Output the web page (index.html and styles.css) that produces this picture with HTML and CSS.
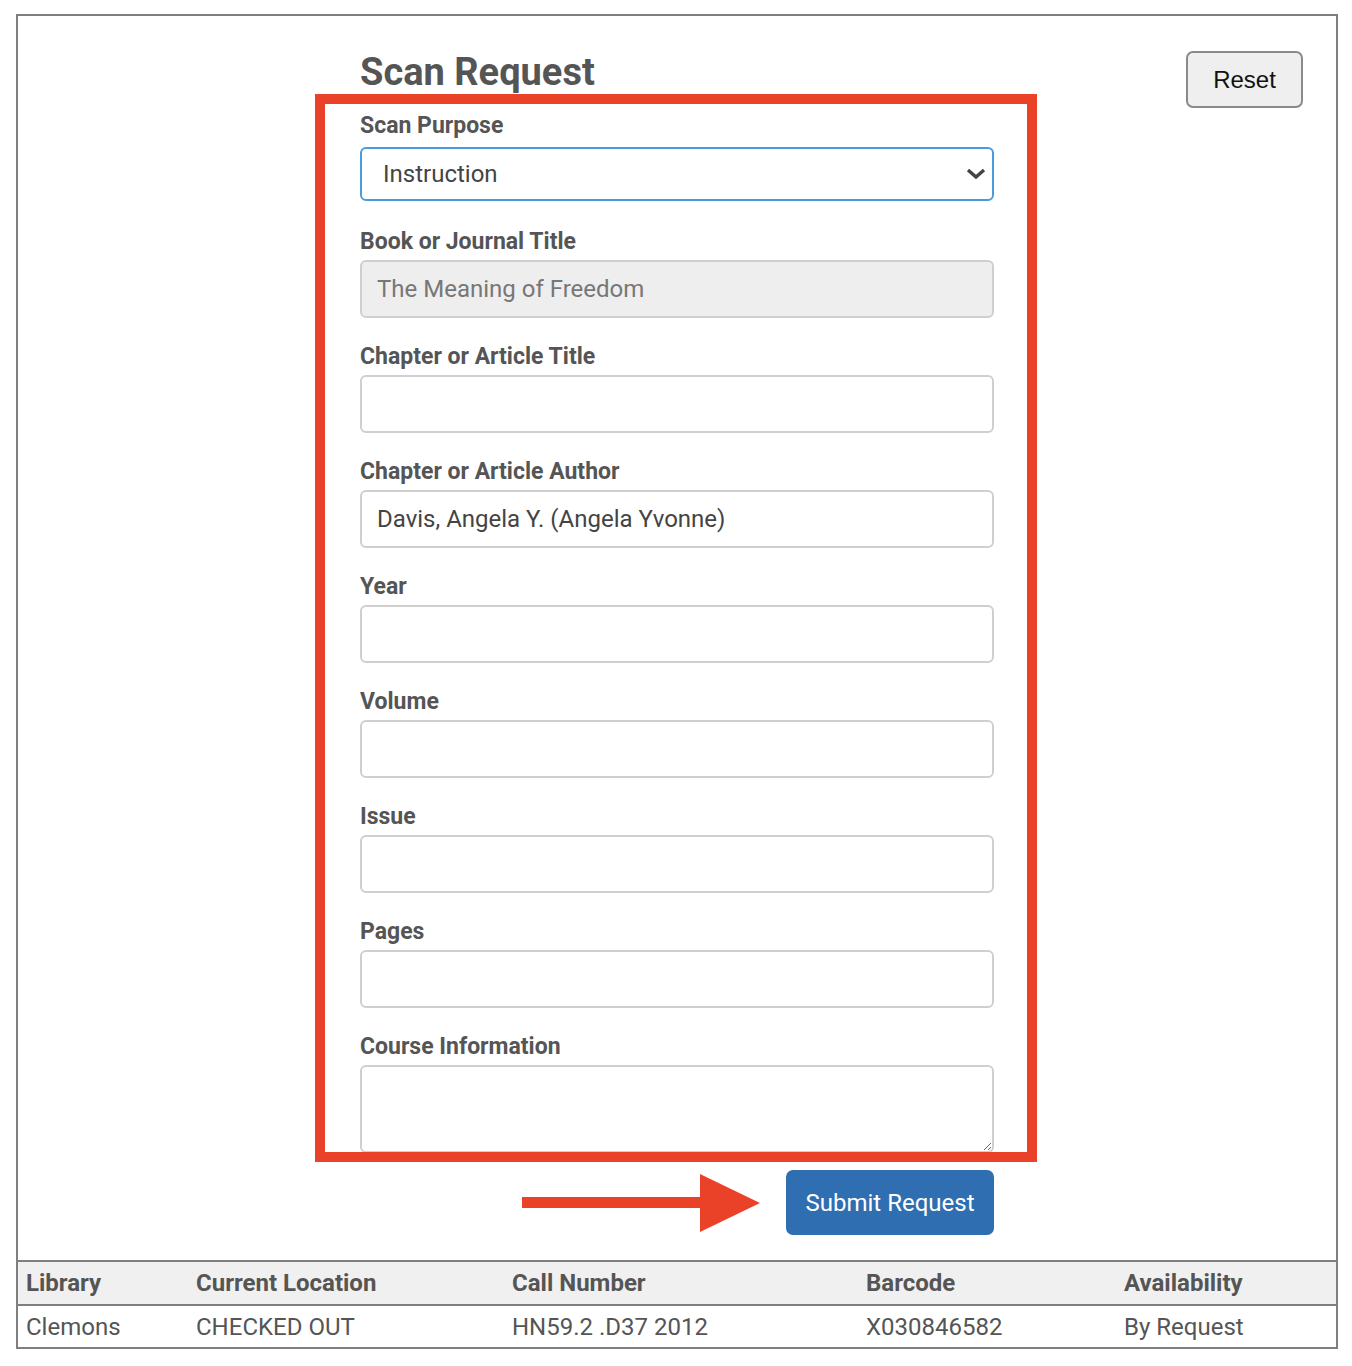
FILE: index.html
```html
<!DOCTYPE html>
<html lang="en">
<head>
<meta charset="utf-8">
<title>Scan Request</title>
<link rel="stylesheet" href="styles.css">
</head>
<body>
<div class="frame">
  <div class="top">
    <div class="spacer"></div>
    <form class="form">
      <h1 class="title">Scan Request</h1>
      <div class="field field-first">
        <label class="label" for="purpose">Scan Purpose</label>
        <div class="select-wrap">
          <select id="purpose" class="select"><option>Instruction</option></select>
          <svg class="chev" width="20" height="14" viewBox="0 0 20 14"><path d="M2 3 L10 10 L18 3" fill="none" stroke="#444" stroke-width="3.4"/></svg>
        </div>
      </div>
      <div class="field">
        <label class="label">Book or Journal Title</label>
        <input class="input disabled" value="The Meaning of Freedom" disabled>
      </div>
      <div class="field">
        <label class="label">Chapter or Article Title</label>
        <input class="input">
      </div>
      <div class="field">
        <label class="label">Chapter or Article Author</label>
        <input class="input" value="Davis, Angela Y. (Angela Yvonne)">
      </div>
      <div class="field">
        <label class="label">Year</label>
        <input class="input">
      </div>
      <div class="field">
        <label class="label">Volume</label>
        <input class="input">
      </div>
      <div class="field">
        <label class="label">Issue</label>
        <input class="input">
      </div>
      <div class="field">
        <label class="label">Pages</label>
        <input class="input">
      </div>
      <div class="field field-last">
        <label class="label">Course Information</label>
        <textarea class="textarea"></textarea>
      </div>
      <div class="actions">
        <svg class="arrow" width="238" height="58" viewBox="0 0 238 58"><rect x="0" y="23" width="182" height="11" fill="#ea4228"/><polygon points="178,0 238,29 178,58" fill="#ea4228"/></svg>
        <button type="button" class="submit">Submit Request</button>
      </div>
    </form>
    <div class="reset-col">
      <button type="button" class="reset">Reset</button>
    </div>
  </div>
  <table class="items">
    <thead>
      <tr><th class="c1">Library</th><th class="c2">Current Location</th><th class="c3">Call Number</th><th class="c4">Barcode</th><th class="c5">Availability</th></tr>
    </thead>
    <tbody>
      <tr><td>Clemons</td><td>CHECKED OUT</td><td>HN59.2 .D37 2012</td><td>X030846582</td><td>By Request</td></tr>
    </tbody>
  </table>
  <div class="highlight"></div>
</div>
</body>
</html>
```
FILE: styles.css
```css
* { box-sizing: border-box; }
html, body { margin: 0; padding: 0; background: #fff; }
body {
  font-family: Roboto, "Liberation Sans", sans-serif;
  color: #555;
}
.frame {
  position: relative;
  margin: 14px 0 0 16px;
  width: 1322px;
  border: 2px solid #7f7f7f;
}
.top {
  display: grid;
  grid-template-columns: 342px 634px 1fr;
}
.form {
  padding-top: 34px;
  display: flex;
  flex-direction: column;
}
.title {
  margin: 0;
  font-size: 38px;
  line-height: 44px;
  font-weight: 700;
  color: #555;
}
.field { display: flex; flex-direction: column; margin-bottom: 24px; }
.field-first { margin-top: 17px; margin-bottom: 26px; }
.label {
  font-size: 23px;
  line-height: 30px;
  font-weight: 700;
  color: #555;
  margin-bottom: 3px;
}
.field-first .label { margin-bottom: 6px; }
.select-wrap { position: relative; }
.select {
  appearance: none;
  -webkit-appearance: none;
  width: 634px;
  height: 54px;
  border: 2px solid #4a9ade;
  border-radius: 6px;
  background: #fff;
  padding: 0 0 0 21px;
  font-family: inherit;
  font-size: 24px;
  color: #444;
}
.chev { position: absolute; right: 8px; top: 20px; }
.input {
  width: 634px;
  height: 58px;
  border: 2px solid #cfcfcf;
  border-radius: 6px;
  background: #fff;
  padding: 0 15px;
  font-family: inherit;
  font-size: 24px;
  color: #444;
}
.input.disabled { background: #eee; color: #777; }
.field-last { margin-bottom: 17px; }
.textarea {
  width: 634px;
  height: 88px;
  border: 2px solid #cfcfcf;
  border-radius: 6px;
  background: #fff;
  font-family: inherit;
  font-size: 24px;
}
.actions {
  display: flex;
  justify-content: flex-end;
  align-items: center;
  gap: 26px;
  margin-bottom: 25px;
}
.submit {
  width: 208px;
  height: 65px;
  background: #2f6eb1;
  color: #fff;
  border: none;
  border-radius: 7px;
  font-family: inherit;
  font-size: 24px;
}
.reset-col { display: flex; justify-content: flex-end; padding: 35px 33px 0 0; align-items: flex-start; }
.reset {
  width: 117px;
  height: 57px;
  border: 2px solid #8a8a8a;
  border-radius: 7px;
  background: #efefef;
  color: #111;
  font-family: "Liberation Sans", Arial, sans-serif;
  font-size: 24px;
}
.items {
  width: 100%;
  border-collapse: collapse;
  table-layout: fixed;
}
.items th, .items td {
  text-align: left;
  padding: 0 8px;
  height: 44px;
  font-size: 24px;
  color: #555;
}
.items th {
  font-weight: 700;
  background: #f0f0f0;
  border-top: 2px solid #7f7f7f;
  border-bottom: 2px solid #7f7f7f;
}
.items td { font-weight: 400; height: 42px; }
.c1 { width: 170px; }
.c2 { width: 316px; }
.c3 { width: 354px; }
.c4 { width: 258px; }
.highlight {
  position: absolute;
  left: 297px;
  top: 78px;
  width: 722px;
  height: 1068px;
  border: 10px solid #ea4228;
  pointer-events: none;
}
```
